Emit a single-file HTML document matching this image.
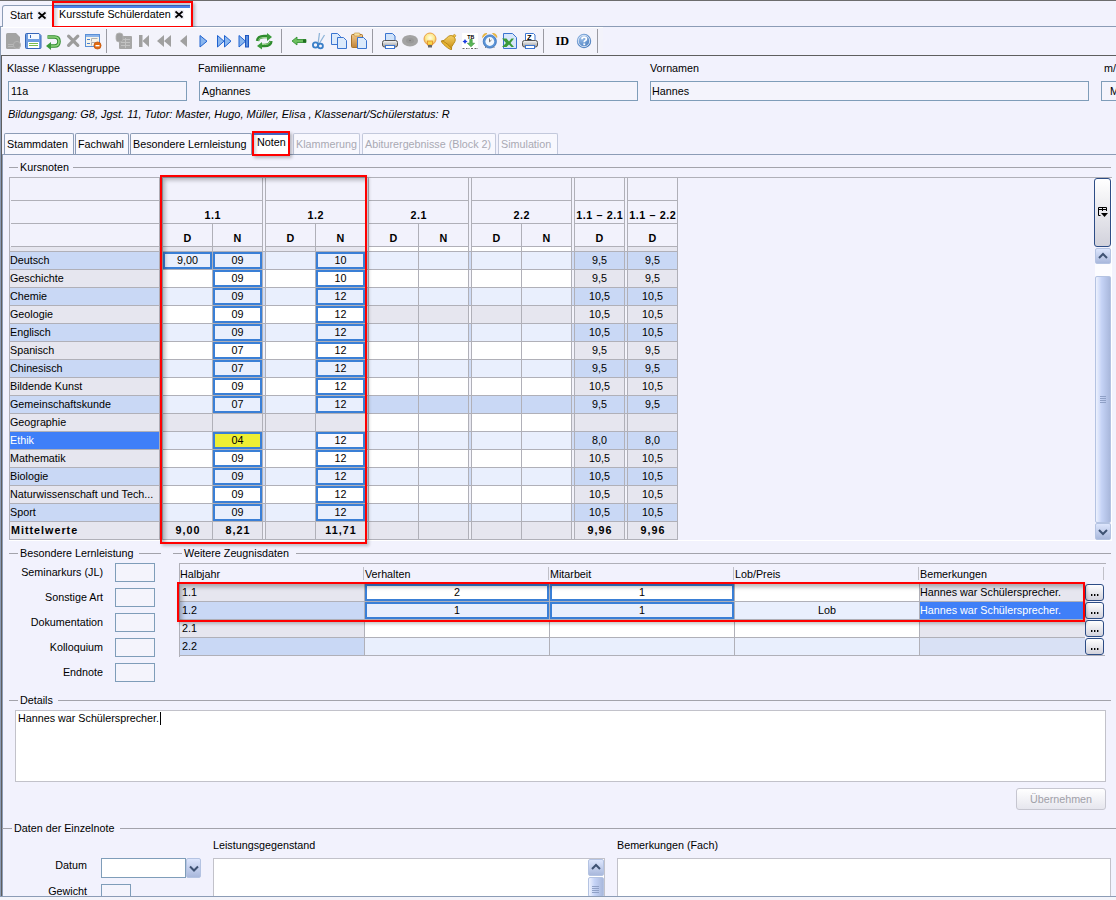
<!DOCTYPE html><html><head><meta charset="utf-8"><style>
*{box-sizing:border-box}
html,body{margin:0;padding:0}
body{width:1116px;height:900px;overflow:hidden;position:relative;background:#f2f2fd;font-family:"Liberation Sans",sans-serif;font-size:10.75px;color:#000}
.a{position:absolute}
.t{position:absolute;white-space:nowrap;line-height:13px}
.b{font-weight:bold}
</style></head><body>

<div class="a" style="left:0px;top:0px;width:1116px;height:1px;background:#6d6d6d"></div>
<div class="a" style="left:0px;top:1px;width:1116px;height:25px;background:#f2f2fd"></div>
<div class="a" style="left:0px;top:26px;width:1116px;height:1px;background:#8c9cb6"></div>
<div class="a" style="left:2px;top:5px;width:52px;height:22px;background:#f8f8fe;border:1px solid #8c9cb6;border-bottom:none;border-radius:3px 0 0 0"></div>
<div class="t" style="left:10px;top:9px;">Start</div>
<div class="a" style="left:37px;top:11px;width:10px;height:9px;background:#ececf4"></div>
<svg class="a" style="left:37px;top:11px" width="10" height="9"><path d="M1.5 1.5L8.5 7.5M8.5 1.5L1.5 7.5" stroke="#000" stroke-width="1.7"/></svg>
<div class="a" style="left:54px;top:3px;width:136px;height:24px;background:#ffffff"></div>
<div class="a" style="left:54px;top:3px;width:136px;height:2px;background:#c3ceda"></div>
<div class="a" style="left:54px;top:5px;width:136px;height:1px;background:#3a5cb5"></div>
<div class="a" style="left:54px;top:6px;width:136px;height:2px;background:#4a84ea"></div>
<div class="a" style="left:54px;top:8px;width:5px;height:19px;background:linear-gradient(90deg,#cfcfd4,#ffffff)"></div>
<div class="t" style="left:59px;top:8px;">Kursstufe Schülerdaten</div>
<div class="a" style="left:174px;top:10px;width:10px;height:9px;background:#f0f0f6"></div>
<svg class="a" style="left:174px;top:10px" width="10" height="9"><path d="M1.5 1.5L8.5 7.5M8.5 1.5L1.5 7.5" stroke="#000" stroke-width="1.7"/></svg>
<div class="a" style="left:52px;top:1px;width:141px;height:27px;border:2px solid #f00;box-shadow:2px 2px 3px rgba(0,0,0,.25)"></div>
<div class="a" style="left:1px;top:27px;width:602px;height:28px;background:#f3f3fb;border-top:1px solid #fff"></div>
<div class="a" style="left:0px;top:55px;width:1116px;height:1px;background:#5f5f5f"></div>
<div class="a" style="left:106px;top:29px;width:1px;height:24px;background:#9a9aa2"></div>
<div class="a" style="left:281px;top:29px;width:1px;height:24px;background:#9a9aa2"></div>
<div class="a" style="left:372px;top:29px;width:1px;height:24px;background:#9a9aa2"></div>
<div class="a" style="left:543px;top:29px;width:1px;height:24px;background:#9a9aa2"></div>
<div class="a" style="left:597px;top:29px;width:1px;height:24px;background:#9a9aa2"></div>
<svg class="a" style="left:0;top:0" width="620" height="56" viewBox="0 0 620 56"><defs><linearGradient id="gb" x1="0" y1="0" x2="0" y2="1"><stop offset="0" stop-color="#b9d3f7"/><stop offset="1" stop-color="#6a9fe6"/></linearGradient><linearGradient id="gg" x1="0" y1="0" x2="0" y2="1"><stop offset="0" stop-color="#a8dc9a"/><stop offset="1" stop-color="#3f9a3a"/></linearGradient><linearGradient id="gp" x1="0" y1="0" x2="0" y2="1"><stop offset="0" stop-color="#fafafa"/><stop offset="1" stop-color="#9a9a9a"/></linearGradient><radialGradient id="gbulb" cx=".5" cy=".4" r=".6"><stop offset="0" stop-color="#fffde8"/><stop offset=".6" stop-color="#fbe98a"/><stop offset="1" stop-color="#eaa24a"/></radialGradient><linearGradient id="gbell" x1="0" y1="0" x2="1" y2="1"><stop offset="0" stop-color="#ffe27a"/><stop offset="1" stop-color="#c88a10"/></linearGradient><linearGradient id="gclip" x1="0" y1="0" x2="0" y2="1"><stop offset="0" stop-color="#f2c88a"/><stop offset="1" stop-color="#c0843a"/></linearGradient></defs><path d="M6 34.5Q6 33 7.5 33H16L20 37V47.5Q20 49 18.5 49H7.5Q6 49 6 47.5Z" fill="#a3a3a3"/><path d="M8 44.5h8M8 46.5h8" stroke="#b8b8b8" stroke-width="1"/><circle cx="17" cy="45" r="3.6" fill="#a0a0a0" stroke="#b5b5b5" stroke-width="1"/><path d="M25.5 34.5Q25.5 33.5 26.5 33.5H39L41 35.5V47.5Q41 48.5 40 48.5H26.5Q25.5 48.5 25.5 47.5Z" fill="#6f9de0" stroke="#3565b9" stroke-width="1"/><rect x="28" y="34" width="11" height="5" fill="#f4f8fe"/><rect x="30" y="35" width="1" height="3" fill="#3565b9"/><rect x="28" y="42" width="11" height="6" fill="#ffffff"/><path d="M29 43.5h9M29 45.5h9" stroke="#7cbc4c" stroke-width="1.2"/><path d="M47.5 37H54.5Q59 37 59 41.5Q59 46 54.5 46H50" fill="none" stroke="#2e8a2e" stroke-width="3.6" stroke-linecap="butt"/><path d="M47.5 37H54.5Q59 37 59 41.5Q59 46 54.5 46H50" fill="none" stroke="#8fd47e" stroke-width="1.6"/><path d="M46 46L51 42V50Z" fill="#3a9a3a"/><path d="M68.6 36.2L77.8 45.4M77.8 36.2L68.6 45.4" stroke="#9c9c9c" stroke-width="3.2" stroke-linecap="round"/><rect x="85.5" y="34.5" width="14" height="12" fill="#f6f4ea" stroke="#5a8fd6" stroke-width="1"/><rect x="86" y="35" width="13" height="2" fill="#8cb4ea"/><path d="M87 39.5h3M87 43.5h3" stroke="#4a7fd0" stroke-width="1"/><path d="M91.5 38.5h6M91.5 38.5v3M91.5 42.5h4M91.5 42.5v3" stroke="#b0b0b0" stroke-width="1"/><circle cx="97.5" cy="45.5" r="3.6" fill="#e06a10" stroke="#b84a00" stroke-width=".6"/><rect x="95.5" y="45" width="4" height="1.4" fill="#fff"/><rect x="119" y="36" width="13" height="13" rx="1" fill="#a6a6a6"/><path d="M121 39.5h9M121 42.5h9M121 45.5h9M125.5 38v10" stroke="#c2c2c2" stroke-width="1"/><rect x="116" y="33" width="7" height="9" rx="3" fill="#a0a0a0" stroke="#b6b6b6" stroke-width=".8"/><rect x="139" y="35" width="3.5" height="12" fill="#a0a0a0"/><path d="M149 35V47L142.5 41Z" fill="#a0a0a0"/><path d="M164 35V47L157 41Z M171 35V47L164 41Z" fill="#a0a0a0"/><path d="M187 35V47L180 41Z" fill="#a0a0a0"/><path d="M200 35.5V47L207 41.2Z" fill="#8ab6ee" stroke="#1f62d0" stroke-width="1" stroke-linejoin="round"/><path d="M217.5 35.5V47L224 41.2Z M224.5 35.5V47L231 41.2Z" fill="#8ab6ee" stroke="#1f62d0" stroke-width="1" stroke-linejoin="round"/><path d="M239 35.5V47L245.5 41.2Z" fill="#8ab6ee" stroke="#1f62d0" stroke-width="1" stroke-linejoin="round"/><rect x="245.5" y="35.5" width="3" height="11.5" fill="#5a8fe0" stroke="#1f56c0" stroke-width="1"/><path d="M257.5 41Q258 36.5 264 36.5H268" fill="none" stroke="#2e8a2e" stroke-width="3.4"/><path d="M267 33L272 37L267 41Z" fill="#3a9a3a"/><path d="M271 41Q270.5 45.5 264.5 45.5H261" fill="none" stroke="#2e8a2e" stroke-width="3.4"/><path d="M262 42L257 46L262 49.5Z" fill="#3a9a3a"/><path d="M258.5 40.5Q259 37.5 264 37.5H267M270 41.5Q269.5 44.5 264.5 44.5H262" fill="none" stroke="#9ad68a" stroke-width="1"/><path d="M292 41L297 37V39.5H306V42.5H297V45Z" fill="#6cbf5e" stroke="#2a8a2a" stroke-width=".8"/><rect x="303" y="39.5" width="3" height="3" fill="#1f6f1f"/><path d="M319.5 33L318 44M324.5 35L319 44" stroke="#8fb5d8" stroke-width="1.3"/><circle cx="315.5" cy="45" r="2.6" fill="none" stroke="#3a7fc8" stroke-width="1.8"/><circle cx="320.5" cy="46" r="2.4" fill="none" stroke="#3a7fc8" stroke-width="1.8"/><path d="M331.5 33.5H337.5L340.5 36.5V44.5H331.5Z" fill="#dceafb" stroke="#3a74d0" stroke-width="1"/><path d="M337.5 37.5H343.5L346.5 40.5V48.5H337.5Z" fill="#dceafb" stroke="#3a74d0" stroke-width="1"/><rect x="351.5" y="34.5" width="11" height="13" rx="1" fill="url(#gclip)" stroke="#a8742a" stroke-width="1"/><rect x="354" y="33" width="6" height="3" rx="1" fill="#f8e0a0" stroke="#b88a3a" stroke-width=".6"/><path d="M357.5 37.5H363.5L366.5 40.5V48.5H357.5Z" fill="#dceafb" stroke="#3a74d0" stroke-width="1"/><path d="M385.5 33.5H392.5L395 36V41H385.5Z" fill="#cfe2fa" stroke="#3a74d0" stroke-width="1"/><rect x="382.5" y="40.5" width="15" height="6.5" rx="2" fill="url(#gp)" stroke="#555" stroke-width="1"/><rect x="385.5" y="45.5" width="9" height="3" fill="#fff" stroke="#3a74d0" stroke-width="1"/><ellipse cx="410" cy="40.7" rx="8" ry="5.8" fill="#a3a3a3"/><ellipse cx="410" cy="40.7" rx="4" ry="2.6" fill="#999"/><circle cx="410" cy="40.5" r=".8" fill="#777"/><circle cx="430" cy="39" r="6" fill="url(#gbulb)" stroke="#eca24a" stroke-width="1"/><rect x="427.5" y="41" width="5" height="4" fill="#f8d84a" stroke="#e08a2a" stroke-width=".8"/><rect x="428" y="45" width="4" height="2.5" fill="#666"/><g transform="rotate(40 450 41)"><path d="M443.5 46.5Q445.5 45 445.5 41Q445.5 35.5 450 35.2Q454.5 35.5 454.5 41Q454.5 45 456.5 46.5Z" fill="url(#gbell)" stroke="#b88a18" stroke-width=".9"/><ellipse cx="450" cy="46.5" rx="6.5" ry="1.4" fill="#e8b430" stroke="#a87a10" stroke-width=".7"/><circle cx="450" cy="34.2" r="1.3" fill="#f2c040" stroke="#b88a18" stroke-width=".6"/></g><rect x="462" y="33" width="16" height="16" fill="#fff"/><text x="467.2" y="38.6" font-family="Liberation Sans" font-weight="bold" font-size="6.2" fill="#000" textLength="7" lengthAdjust="spacingAndGlyphs">TB</text><path d="M465 39L465.9 40.6L467.5 41.5L465.9 42.4L465 44L464.1 42.4L462.5 41.5L464.1 40.6Z" fill="#1a3ae0"/><path d="M469.8 39.5H472.2V43.2H474.6L471 46.8L467.4 43.2H469.8Z" fill="#5cb85a" stroke="#2a8a2a" stroke-width=".6"/><path d="M462.5 48.5h2M466 48.5h1.5M468.5 48.5h1M471 48.5h2M474.5 48.5h1.5M476.5 48.5h1" stroke="#666" stroke-width="1"/><path d="M482.5 37.5Q483 33 487 33.5Z M497 37.5Q496.5 33 492.5 33.5Z" fill="#f4c040" stroke="#d8a020" stroke-width=".6"/><circle cx="489.8" cy="41.5" r="6.6" fill="#5a94d8" stroke="#3a70b8" stroke-width=".8"/><circle cx="489.8" cy="41.5" r="4.4" fill="#f4f8fd"/><path d="M489.5 38.5V41.8L491.5 40" stroke="#666" stroke-width=".9" fill="none"/><path d="M485 48L486.5 46.5M494.5 48L493 46.5" stroke="#888" stroke-width="1"/><path d="M503.5 33.5H512.5L516.5 37.5V48.5H503.5Z" fill="#d6e6fb" stroke="#3a74d0" stroke-width="1"/><path d="M502 38.5H506.5L509 41.5L511.5 38.5H514L510.5 43L514 47H511.5L509 44.5L506.5 47H502L506 43Z" fill="#3a9a3a"/><path d="M525.5 33.5H533.5L535 35V41H525.5Z" fill="#fff" stroke="#3a74d0" stroke-width="1"/><text x="527" y="40" font-family="Liberation Sans" font-weight="bold" font-size="7.5" fill="#000">Z</text><rect x="522.5" y="40.5" width="15" height="6.5" rx="2" fill="url(#gp)" stroke="#555" stroke-width="1"/><rect x="525.5" y="45.5" width="9" height="3" fill="#fff" stroke="#3a74d0" stroke-width="1"/><text x="555.5" y="45" font-family="Liberation Serif" font-weight="bold" font-size="11.5" fill="#000" textLength="13.5" lengthAdjust="spacingAndGlyphs">ID</text><defs><radialGradient id="ghelp" cx=".35" cy=".3" r=".8"><stop offset="0" stop-color="#9cc0ea"/><stop offset="1" stop-color="#3f74b8"/></radialGradient></defs><circle cx="584" cy="41" r="7.2" fill="url(#ghelp)"/><circle cx="584" cy="41" r="5.7" fill="none" stroke="#dfe9f7" stroke-width=".9"/><path d="M582 39.2Q582 37.2 584.2 37.2Q586.4 37.2 586.4 39Q586.4 40.2 585 40.8Q584.2 41.2 584.2 42.3" fill="none" stroke="#fff" stroke-width="1.7"/><rect x="583.3" y="43.4" width="1.9" height="1.8" fill="#fff"/></svg>
<div class="a" style="left:0px;top:26px;width:1px;height:874px;background:#8c9cb6"></div>
<div class="a" style="left:1px;top:55px;width:1px;height:841px;background:#5f5f5f"></div>
<div class="t" style="left:7px;top:62px;">Klasse / Klassengruppe</div>
<div class="t" style="left:198px;top:62px;">Familienname</div>
<div class="t" style="left:650px;top:62px;">Vornamen</div>
<div class="t" style="left:1104px;top:62px;">m/</div>
<div class="a" style="left:8px;top:81px;width:179px;height:20px;background:#f4f4fc;border:1px solid #7f9db9"></div>
<div class="t" style="left:11px;top:85px;">11a</div>
<div class="a" style="left:199px;top:81px;width:439px;height:20px;background:#f4f4fc;border:1px solid #7f9db9"></div>
<div class="t" style="left:202px;top:85px;">Aghannes</div>
<div class="a" style="left:650px;top:81px;width:439px;height:20px;background:#f4f4fc;border:1px solid #7f9db9"></div>
<div class="t" style="left:652px;top:85px;">Hannes</div>
<div class="a" style="left:1101px;top:81px;width:30px;height:20px;background:#f4f4fc;border:1px solid #7f9db9"></div>
<div class="t" style="left:1110px;top:85px;">M</div>
<div class="t" style="left:8px;top:108px;font-style:italic;font-size:10.95px">Bildungsgang: G8, Jgst. 11, Tutor: Master, Hugo, Müller, Elisa , Klassenart/Schülerstatus: R</div>
<div class="a" style="left:2px;top:154px;width:1114px;height:1px;background:#8c9cb6"></div>
<div class="a" style="left:2px;top:154px;width:1px;height:742px;background:#8c9cb6"></div>
<div class="a" style="left:4px;top:133px;width:70px;height:21px;background:#f8f8fe;border:1px solid #8c9cb6;border-bottom:none;border-radius:2px 2px 0 0"></div>
<div class="t" style="left:7px;top:138px;color:#000">Stammdaten</div>
<div class="a" style="left:75px;top:133px;width:54px;height:21px;background:#f8f8fe;border:1px solid #8c9cb6;border-bottom:none;border-radius:2px 2px 0 0"></div>
<div class="t" style="left:78px;top:138px;color:#000">Fachwahl</div>
<div class="a" style="left:130px;top:133px;width:122px;height:21px;background:#f8f8fe;border:1px solid #8c9cb6;border-bottom:none;border-radius:2px 2px 0 0"></div>
<div class="t" style="left:133px;top:138px;color:#000">Besondere Lernleistung</div>
<div class="a" style="left:293px;top:133px;width:67px;height:21px;background:#f8f8fe;border:1px solid #c3c9dc;border-bottom:none;border-radius:2px 2px 0 0"></div>
<div class="t" style="left:296px;top:138px;color:#a9a9b3">Klammerung</div>
<div class="a" style="left:362px;top:133px;width:134px;height:21px;background:#f8f8fe;border:1px solid #c3c9dc;border-bottom:none;border-radius:2px 2px 0 0"></div>
<div class="t" style="left:365px;top:138px;color:#a9a9b3">Abiturergebnisse (Block 2)</div>
<div class="a" style="left:498px;top:133px;width:60px;height:21px;background:#f8f8fe;border:1px solid #c3c9dc;border-bottom:none;border-radius:2px 2px 0 0"></div>
<div class="t" style="left:501px;top:138px;color:#a9a9b3">Simulation</div>
<div class="a" style="left:254px;top:133px;width:34px;height:21px;background:#ffffff"></div>
<div class="a" style="left:254px;top:133px;width:34px;height:2px;background:#4466c0"></div>
<div class="a" style="left:254px;top:135px;width:4px;height:19px;background:linear-gradient(90deg,#d4d4da,#ffffff)"></div>
<div class="t" style="left:257px;top:136px;">Noten</div>
<div class="a" style="left:252px;top:131px;width:38px;height:25px;border:2px solid #f00;box-shadow:2px 2px 3px rgba(0,0,0,.25)"></div>
<div class="a" style="left:9px;top:167px;width:9px;height:1px;background:#a3a3ab"></div>
<div class="t" style="left:20px;top:161px;">Kursnoten</div>
<div class="a" style="left:73px;top:167px;width:1038px;height:1px;background:#a3a3ab"></div>
<div class="a" style="left:9px;top:177px;width:1103px;height:1px;background:#b0b0b8"></div>
<div class="a" style="left:9px;top:177px;width:1px;height:363px;background:#b0b0b8"></div>
<div class="a" style="left:9px;top:540px;width:1103px;height:1px;background:#fff"></div>
<div class="a" style="left:10px;top:178px;width:667px;height:68px;background:#f2f2fc"></div>
<div class="a" style="left:159px;top:178px;width:1px;height:361px;background:#b0b0b8"></div>
<div class="a" style="left:162px;top:178px;width:1px;height:361px;background:#b0b0b8"></div>
<div class="a" style="left:262px;top:178px;width:1px;height:361px;background:#b0b0b8"></div>
<div class="a" style="left:265px;top:178px;width:1px;height:361px;background:#b0b0b8"></div>
<div class="a" style="left:365px;top:178px;width:1px;height:361px;background:#b0b0b8"></div>
<div class="a" style="left:368px;top:178px;width:1px;height:361px;background:#b0b0b8"></div>
<div class="a" style="left:468px;top:178px;width:1px;height:361px;background:#b0b0b8"></div>
<div class="a" style="left:471px;top:178px;width:1px;height:361px;background:#b0b0b8"></div>
<div class="a" style="left:571px;top:178px;width:1px;height:361px;background:#b0b0b8"></div>
<div class="a" style="left:574px;top:178px;width:1px;height:361px;background:#b0b0b8"></div>
<div class="a" style="left:624px;top:178px;width:1px;height:361px;background:#b0b0b8"></div>
<div class="a" style="left:627px;top:178px;width:1px;height:361px;background:#b0b0b8"></div>
<div class="a" style="left:677px;top:178px;width:1px;height:361px;background:#b0b0b8"></div>
<div class="a" style="left:212px;top:224px;width:1px;height:315px;background:#b0b0b8"></div>
<div class="a" style="left:315px;top:224px;width:1px;height:315px;background:#b0b0b8"></div>
<div class="a" style="left:418px;top:224px;width:1px;height:315px;background:#b0b0b8"></div>
<div class="a" style="left:521px;top:224px;width:1px;height:315px;background:#b0b0b8"></div>
<div class="a" style="left:11px;top:200px;width:148px;height:1px;background:#b0b0b8"></div>
<div class="a" style="left:163px;top:200px;width:99px;height:1px;background:#b0b0b8"></div>
<div class="a" style="left:266px;top:200px;width:99px;height:1px;background:#b0b0b8"></div>
<div class="a" style="left:369px;top:200px;width:99px;height:1px;background:#b0b0b8"></div>
<div class="a" style="left:472px;top:200px;width:99px;height:1px;background:#b0b0b8"></div>
<div class="a" style="left:575px;top:200px;width:49px;height:1px;background:#b0b0b8"></div>
<div class="a" style="left:628px;top:200px;width:49px;height:1px;background:#b0b0b8"></div>
<div class="a" style="left:11px;top:223px;width:148px;height:1px;background:#b0b0b8"></div>
<div class="a" style="left:163px;top:223px;width:99px;height:1px;background:#b0b0b8"></div>
<div class="a" style="left:266px;top:223px;width:99px;height:1px;background:#b0b0b8"></div>
<div class="a" style="left:369px;top:223px;width:99px;height:1px;background:#b0b0b8"></div>
<div class="a" style="left:472px;top:223px;width:99px;height:1px;background:#b0b0b8"></div>
<div class="a" style="left:575px;top:223px;width:49px;height:1px;background:#b0b0b8"></div>
<div class="a" style="left:628px;top:223px;width:49px;height:1px;background:#b0b0b8"></div>
<div class="a" style="left:11px;top:246px;width:148px;height:1px;background:#b0b0b8"></div>
<div class="a" style="left:163px;top:246px;width:99px;height:1px;background:#b0b0b8"></div>
<div class="a" style="left:266px;top:246px;width:99px;height:1px;background:#b0b0b8"></div>
<div class="a" style="left:369px;top:246px;width:99px;height:1px;background:#b0b0b8"></div>
<div class="a" style="left:472px;top:246px;width:99px;height:1px;background:#b0b0b8"></div>
<div class="a" style="left:575px;top:246px;width:49px;height:1px;background:#b0b0b8"></div>
<div class="a" style="left:628px;top:246px;width:49px;height:1px;background:#b0b0b8"></div>
<div class="t" style="left:163px;top:209px;width:99px;text-align:center;font-weight:bold;letter-spacing:0.6px;text-indent:0.6px">1.1</div>
<div class="t" style="left:266px;top:209px;width:99px;text-align:center;font-weight:bold;letter-spacing:0.6px;text-indent:0.6px">1.2</div>
<div class="t" style="left:369px;top:209px;width:99px;text-align:center;font-weight:bold;letter-spacing:0.6px;text-indent:0.6px">2.1</div>
<div class="t" style="left:472px;top:209px;width:99px;text-align:center;font-weight:bold;letter-spacing:0.6px;text-indent:0.6px">2.2</div>
<div class="t" style="left:575px;top:209px;width:49px;text-align:center;font-weight:bold;letter-spacing:0.6px;text-indent:0.6px">1.1 &ndash; 2.1</div>
<div class="t" style="left:628px;top:209px;width:49px;text-align:center;font-weight:bold;letter-spacing:0.6px;text-indent:0.6px">1.1 &ndash; 2.2</div>
<div class="t" style="left:163px;top:232px;width:49px;text-align:center;font-weight:bold;letter-spacing:0.6px;text-indent:0.6px">D</div>
<div class="t" style="left:213px;top:232px;width:49px;text-align:center;font-weight:bold;letter-spacing:0.6px;text-indent:0.6px">N</div>
<div class="t" style="left:266px;top:232px;width:49px;text-align:center;font-weight:bold;letter-spacing:0.6px;text-indent:0.6px">D</div>
<div class="t" style="left:316px;top:232px;width:49px;text-align:center;font-weight:bold;letter-spacing:0.6px;text-indent:0.6px">N</div>
<div class="t" style="left:369px;top:232px;width:49px;text-align:center;font-weight:bold;letter-spacing:0.6px;text-indent:0.6px">D</div>
<div class="t" style="left:419px;top:232px;width:49px;text-align:center;font-weight:bold;letter-spacing:0.6px;text-indent:0.6px">N</div>
<div class="t" style="left:472px;top:232px;width:49px;text-align:center;font-weight:bold;letter-spacing:0.6px;text-indent:0.6px">D</div>
<div class="t" style="left:522px;top:232px;width:49px;text-align:center;font-weight:bold;letter-spacing:0.6px;text-indent:0.6px">N</div>
<div class="t" style="left:575px;top:232px;width:49px;text-align:center;font-weight:bold;letter-spacing:0.6px;text-indent:0.6px">D</div>
<div class="t" style="left:628px;top:232px;width:49px;text-align:center;font-weight:bold;letter-spacing:0.6px;text-indent:0.6px">D</div>
<div class="a" style="left:10px;top:247px;width:149px;height:4px;background:#e6e6ef"></div>
<div class="a" style="left:163px;top:247px;width:49px;height:4px;background:#e6e6ef"></div>
<div class="a" style="left:213px;top:247px;width:49px;height:4px;background:#e6e6ef"></div>
<div class="a" style="left:266px;top:247px;width:49px;height:4px;background:#e6e6ef"></div>
<div class="a" style="left:316px;top:247px;width:49px;height:4px;background:#e6e6ef"></div>
<div class="a" style="left:369px;top:247px;width:49px;height:4px;background:#ffffff"></div>
<div class="a" style="left:419px;top:247px;width:49px;height:4px;background:#ffffff"></div>
<div class="a" style="left:472px;top:247px;width:49px;height:4px;background:#ffffff"></div>
<div class="a" style="left:522px;top:247px;width:49px;height:4px;background:#ffffff"></div>
<div class="a" style="left:575px;top:247px;width:49px;height:4px;background:#e6e6ef"></div>
<div class="a" style="left:628px;top:247px;width:49px;height:4px;background:#e6e6ef"></div>
<div class="a" style="left:160px;top:247px;width:2px;height:4px;background:#f4f4fc"></div>
<div class="a" style="left:263px;top:247px;width:2px;height:4px;background:#f4f4fc"></div>
<div class="a" style="left:366px;top:247px;width:2px;height:4px;background:#f4f4fc"></div>
<div class="a" style="left:469px;top:247px;width:2px;height:4px;background:#f4f4fc"></div>
<div class="a" style="left:572px;top:247px;width:2px;height:4px;background:#f4f4fc"></div>
<div class="a" style="left:625px;top:247px;width:2px;height:4px;background:#f4f4fc"></div>
<div class="a" style="left:10px;top:251px;width:668px;height:1px;background:#b0b0b8"></div>
<div class="a" style="left:10px;top:252px;width:149px;height:17px;background:#c9d8f5"></div>
<div class="t" style="left:10px;top:254px;">Deutsch</div>
<div class="a" style="left:163px;top:252px;width:49px;height:17px;background:#e9effd"></div>
<div class="a" style="left:213px;top:252px;width:49px;height:17px;background:#e9effd"></div>
<div class="a" style="left:266px;top:252px;width:49px;height:17px;background:#e9effd"></div>
<div class="a" style="left:316px;top:252px;width:49px;height:17px;background:#e9effd"></div>
<div class="a" style="left:369px;top:252px;width:49px;height:17px;background:#e9effd"></div>
<div class="a" style="left:419px;top:252px;width:49px;height:17px;background:#e9effd"></div>
<div class="a" style="left:472px;top:252px;width:49px;height:17px;background:#e9effd"></div>
<div class="a" style="left:522px;top:252px;width:49px;height:17px;background:#e9effd"></div>
<div class="a" style="left:575px;top:252px;width:49px;height:17px;background:#c9d8f5"></div>
<div class="a" style="left:628px;top:252px;width:49px;height:17px;background:#c9d8f5"></div>
<div class="a" style="left:160px;top:252px;width:2px;height:17px;background:#cfdcf6"></div>
<div class="a" style="left:263px;top:252px;width:2px;height:17px;background:#cfdcf6"></div>
<div class="a" style="left:366px;top:252px;width:2px;height:17px;background:#cfdcf6"></div>
<div class="a" style="left:469px;top:252px;width:2px;height:17px;background:#cfdcf6"></div>
<div class="a" style="left:572px;top:252px;width:2px;height:17px;background:#cfdcf6"></div>
<div class="a" style="left:625px;top:252px;width:2px;height:17px;background:#cfdcf6"></div>
<div class="a" style="left:163px;top:252px;width:49px;height:17px;background:#e9effd;border:2px solid #3a7fd6"></div>
<div class="t" style="left:163px;top:254px;width:49px;text-align:center;">9,00</div>
<div class="a" style="left:213px;top:252px;width:49px;height:17px;background:#e9effd;border:2px solid #3a7fd6"></div>
<div class="t" style="left:213px;top:254px;width:49px;text-align:center;">09</div>
<div class="a" style="left:316px;top:252px;width:49px;height:17px;background:#e9effd;border:2px solid #3a7fd6"></div>
<div class="t" style="left:316px;top:254px;width:49px;text-align:center;">10</div>
<div class="t" style="left:575px;top:254px;width:49px;text-align:center;">9,5</div>
<div class="t" style="left:628px;top:254px;width:49px;text-align:center;">9,5</div>
<div class="a" style="left:10px;top:269px;width:668px;height:1px;background:#b0b0b8"></div>
<div class="a" style="left:10px;top:270px;width:149px;height:17px;background:#e6e6ef"></div>
<div class="t" style="left:10px;top:272px;">Geschichte</div>
<div class="a" style="left:163px;top:270px;width:49px;height:17px;background:#ffffff"></div>
<div class="a" style="left:213px;top:270px;width:49px;height:17px;background:#ffffff"></div>
<div class="a" style="left:266px;top:270px;width:49px;height:17px;background:#ffffff"></div>
<div class="a" style="left:316px;top:270px;width:49px;height:17px;background:#ffffff"></div>
<div class="a" style="left:369px;top:270px;width:49px;height:17px;background:#ffffff"></div>
<div class="a" style="left:419px;top:270px;width:49px;height:17px;background:#ffffff"></div>
<div class="a" style="left:472px;top:270px;width:49px;height:17px;background:#ffffff"></div>
<div class="a" style="left:522px;top:270px;width:49px;height:17px;background:#ffffff"></div>
<div class="a" style="left:575px;top:270px;width:49px;height:17px;background:#e6e6ef"></div>
<div class="a" style="left:628px;top:270px;width:49px;height:17px;background:#e6e6ef"></div>
<div class="a" style="left:160px;top:270px;width:2px;height:17px;background:#f4f4fc"></div>
<div class="a" style="left:263px;top:270px;width:2px;height:17px;background:#f4f4fc"></div>
<div class="a" style="left:366px;top:270px;width:2px;height:17px;background:#f4f4fc"></div>
<div class="a" style="left:469px;top:270px;width:2px;height:17px;background:#f4f4fc"></div>
<div class="a" style="left:572px;top:270px;width:2px;height:17px;background:#f4f4fc"></div>
<div class="a" style="left:625px;top:270px;width:2px;height:17px;background:#f4f4fc"></div>
<div class="a" style="left:213px;top:270px;width:49px;height:17px;background:#ffffff;border:2px solid #3a7fd6"></div>
<div class="t" style="left:213px;top:272px;width:49px;text-align:center;">09</div>
<div class="a" style="left:316px;top:270px;width:49px;height:17px;background:#ffffff;border:2px solid #3a7fd6"></div>
<div class="t" style="left:316px;top:272px;width:49px;text-align:center;">10</div>
<div class="t" style="left:575px;top:272px;width:49px;text-align:center;">9,5</div>
<div class="t" style="left:628px;top:272px;width:49px;text-align:center;">9,5</div>
<div class="a" style="left:10px;top:287px;width:668px;height:1px;background:#b0b0b8"></div>
<div class="a" style="left:10px;top:288px;width:149px;height:17px;background:#c9d8f5"></div>
<div class="t" style="left:10px;top:290px;">Chemie</div>
<div class="a" style="left:163px;top:288px;width:49px;height:17px;background:#e9effd"></div>
<div class="a" style="left:213px;top:288px;width:49px;height:17px;background:#e9effd"></div>
<div class="a" style="left:266px;top:288px;width:49px;height:17px;background:#e9effd"></div>
<div class="a" style="left:316px;top:288px;width:49px;height:17px;background:#e9effd"></div>
<div class="a" style="left:369px;top:288px;width:49px;height:17px;background:#e9effd"></div>
<div class="a" style="left:419px;top:288px;width:49px;height:17px;background:#e9effd"></div>
<div class="a" style="left:472px;top:288px;width:49px;height:17px;background:#e9effd"></div>
<div class="a" style="left:522px;top:288px;width:49px;height:17px;background:#e9effd"></div>
<div class="a" style="left:575px;top:288px;width:49px;height:17px;background:#c9d8f5"></div>
<div class="a" style="left:628px;top:288px;width:49px;height:17px;background:#c9d8f5"></div>
<div class="a" style="left:160px;top:288px;width:2px;height:17px;background:#cfdcf6"></div>
<div class="a" style="left:263px;top:288px;width:2px;height:17px;background:#cfdcf6"></div>
<div class="a" style="left:366px;top:288px;width:2px;height:17px;background:#cfdcf6"></div>
<div class="a" style="left:469px;top:288px;width:2px;height:17px;background:#cfdcf6"></div>
<div class="a" style="left:572px;top:288px;width:2px;height:17px;background:#cfdcf6"></div>
<div class="a" style="left:625px;top:288px;width:2px;height:17px;background:#cfdcf6"></div>
<div class="a" style="left:213px;top:288px;width:49px;height:17px;background:#e9effd;border:2px solid #3a7fd6"></div>
<div class="t" style="left:213px;top:290px;width:49px;text-align:center;">09</div>
<div class="a" style="left:316px;top:288px;width:49px;height:17px;background:#e9effd;border:2px solid #3a7fd6"></div>
<div class="t" style="left:316px;top:290px;width:49px;text-align:center;">12</div>
<div class="t" style="left:575px;top:290px;width:49px;text-align:center;">10,5</div>
<div class="t" style="left:628px;top:290px;width:49px;text-align:center;">10,5</div>
<div class="a" style="left:10px;top:305px;width:668px;height:1px;background:#b0b0b8"></div>
<div class="a" style="left:10px;top:306px;width:149px;height:17px;background:#e6e6ef"></div>
<div class="t" style="left:10px;top:308px;">Geologie</div>
<div class="a" style="left:163px;top:306px;width:49px;height:17px;background:#ffffff"></div>
<div class="a" style="left:213px;top:306px;width:49px;height:17px;background:#ffffff"></div>
<div class="a" style="left:266px;top:306px;width:49px;height:17px;background:#ffffff"></div>
<div class="a" style="left:316px;top:306px;width:49px;height:17px;background:#ffffff"></div>
<div class="a" style="left:369px;top:306px;width:49px;height:17px;background:#e6e6ef"></div>
<div class="a" style="left:419px;top:306px;width:49px;height:17px;background:#e6e6ef"></div>
<div class="a" style="left:472px;top:306px;width:49px;height:17px;background:#e6e6ef"></div>
<div class="a" style="left:522px;top:306px;width:49px;height:17px;background:#e6e6ef"></div>
<div class="a" style="left:575px;top:306px;width:49px;height:17px;background:#e6e6ef"></div>
<div class="a" style="left:628px;top:306px;width:49px;height:17px;background:#e6e6ef"></div>
<div class="a" style="left:160px;top:306px;width:2px;height:17px;background:#f4f4fc"></div>
<div class="a" style="left:263px;top:306px;width:2px;height:17px;background:#f4f4fc"></div>
<div class="a" style="left:366px;top:306px;width:2px;height:17px;background:#f4f4fc"></div>
<div class="a" style="left:469px;top:306px;width:2px;height:17px;background:#f4f4fc"></div>
<div class="a" style="left:572px;top:306px;width:2px;height:17px;background:#f4f4fc"></div>
<div class="a" style="left:625px;top:306px;width:2px;height:17px;background:#f4f4fc"></div>
<div class="a" style="left:213px;top:306px;width:49px;height:17px;background:#ffffff;border:2px solid #3a7fd6"></div>
<div class="t" style="left:213px;top:308px;width:49px;text-align:center;">09</div>
<div class="a" style="left:316px;top:306px;width:49px;height:17px;background:#ffffff;border:2px solid #3a7fd6"></div>
<div class="t" style="left:316px;top:308px;width:49px;text-align:center;">12</div>
<div class="t" style="left:575px;top:308px;width:49px;text-align:center;">10,5</div>
<div class="t" style="left:628px;top:308px;width:49px;text-align:center;">10,5</div>
<div class="a" style="left:10px;top:323px;width:668px;height:1px;background:#b0b0b8"></div>
<div class="a" style="left:10px;top:324px;width:149px;height:17px;background:#c9d8f5"></div>
<div class="t" style="left:10px;top:326px;">Englisch</div>
<div class="a" style="left:163px;top:324px;width:49px;height:17px;background:#e9effd"></div>
<div class="a" style="left:213px;top:324px;width:49px;height:17px;background:#e9effd"></div>
<div class="a" style="left:266px;top:324px;width:49px;height:17px;background:#e9effd"></div>
<div class="a" style="left:316px;top:324px;width:49px;height:17px;background:#e9effd"></div>
<div class="a" style="left:369px;top:324px;width:49px;height:17px;background:#e9effd"></div>
<div class="a" style="left:419px;top:324px;width:49px;height:17px;background:#e9effd"></div>
<div class="a" style="left:472px;top:324px;width:49px;height:17px;background:#e9effd"></div>
<div class="a" style="left:522px;top:324px;width:49px;height:17px;background:#e9effd"></div>
<div class="a" style="left:575px;top:324px;width:49px;height:17px;background:#c9d8f5"></div>
<div class="a" style="left:628px;top:324px;width:49px;height:17px;background:#c9d8f5"></div>
<div class="a" style="left:160px;top:324px;width:2px;height:17px;background:#cfdcf6"></div>
<div class="a" style="left:263px;top:324px;width:2px;height:17px;background:#cfdcf6"></div>
<div class="a" style="left:366px;top:324px;width:2px;height:17px;background:#cfdcf6"></div>
<div class="a" style="left:469px;top:324px;width:2px;height:17px;background:#cfdcf6"></div>
<div class="a" style="left:572px;top:324px;width:2px;height:17px;background:#cfdcf6"></div>
<div class="a" style="left:625px;top:324px;width:2px;height:17px;background:#cfdcf6"></div>
<div class="a" style="left:213px;top:324px;width:49px;height:17px;background:#e9effd;border:2px solid #3a7fd6"></div>
<div class="t" style="left:213px;top:326px;width:49px;text-align:center;">09</div>
<div class="a" style="left:316px;top:324px;width:49px;height:17px;background:#e9effd;border:2px solid #3a7fd6"></div>
<div class="t" style="left:316px;top:326px;width:49px;text-align:center;">12</div>
<div class="t" style="left:575px;top:326px;width:49px;text-align:center;">10,5</div>
<div class="t" style="left:628px;top:326px;width:49px;text-align:center;">10,5</div>
<div class="a" style="left:10px;top:341px;width:668px;height:1px;background:#b0b0b8"></div>
<div class="a" style="left:10px;top:342px;width:149px;height:17px;background:#e6e6ef"></div>
<div class="t" style="left:10px;top:344px;">Spanisch</div>
<div class="a" style="left:163px;top:342px;width:49px;height:17px;background:#ffffff"></div>
<div class="a" style="left:213px;top:342px;width:49px;height:17px;background:#ffffff"></div>
<div class="a" style="left:266px;top:342px;width:49px;height:17px;background:#ffffff"></div>
<div class="a" style="left:316px;top:342px;width:49px;height:17px;background:#ffffff"></div>
<div class="a" style="left:369px;top:342px;width:49px;height:17px;background:#ffffff"></div>
<div class="a" style="left:419px;top:342px;width:49px;height:17px;background:#ffffff"></div>
<div class="a" style="left:472px;top:342px;width:49px;height:17px;background:#ffffff"></div>
<div class="a" style="left:522px;top:342px;width:49px;height:17px;background:#ffffff"></div>
<div class="a" style="left:575px;top:342px;width:49px;height:17px;background:#e6e6ef"></div>
<div class="a" style="left:628px;top:342px;width:49px;height:17px;background:#e6e6ef"></div>
<div class="a" style="left:160px;top:342px;width:2px;height:17px;background:#f4f4fc"></div>
<div class="a" style="left:263px;top:342px;width:2px;height:17px;background:#f4f4fc"></div>
<div class="a" style="left:366px;top:342px;width:2px;height:17px;background:#f4f4fc"></div>
<div class="a" style="left:469px;top:342px;width:2px;height:17px;background:#f4f4fc"></div>
<div class="a" style="left:572px;top:342px;width:2px;height:17px;background:#f4f4fc"></div>
<div class="a" style="left:625px;top:342px;width:2px;height:17px;background:#f4f4fc"></div>
<div class="a" style="left:213px;top:342px;width:49px;height:17px;background:#ffffff;border:2px solid #3a7fd6"></div>
<div class="t" style="left:213px;top:344px;width:49px;text-align:center;">07</div>
<div class="a" style="left:316px;top:342px;width:49px;height:17px;background:#ffffff;border:2px solid #3a7fd6"></div>
<div class="t" style="left:316px;top:344px;width:49px;text-align:center;">12</div>
<div class="t" style="left:575px;top:344px;width:49px;text-align:center;">9,5</div>
<div class="t" style="left:628px;top:344px;width:49px;text-align:center;">9,5</div>
<div class="a" style="left:10px;top:359px;width:668px;height:1px;background:#b0b0b8"></div>
<div class="a" style="left:10px;top:360px;width:149px;height:17px;background:#c9d8f5"></div>
<div class="t" style="left:10px;top:362px;">Chinesisch</div>
<div class="a" style="left:163px;top:360px;width:49px;height:17px;background:#e9effd"></div>
<div class="a" style="left:213px;top:360px;width:49px;height:17px;background:#e9effd"></div>
<div class="a" style="left:266px;top:360px;width:49px;height:17px;background:#e9effd"></div>
<div class="a" style="left:316px;top:360px;width:49px;height:17px;background:#e9effd"></div>
<div class="a" style="left:369px;top:360px;width:49px;height:17px;background:#e9effd"></div>
<div class="a" style="left:419px;top:360px;width:49px;height:17px;background:#e9effd"></div>
<div class="a" style="left:472px;top:360px;width:49px;height:17px;background:#e9effd"></div>
<div class="a" style="left:522px;top:360px;width:49px;height:17px;background:#e9effd"></div>
<div class="a" style="left:575px;top:360px;width:49px;height:17px;background:#c9d8f5"></div>
<div class="a" style="left:628px;top:360px;width:49px;height:17px;background:#c9d8f5"></div>
<div class="a" style="left:160px;top:360px;width:2px;height:17px;background:#cfdcf6"></div>
<div class="a" style="left:263px;top:360px;width:2px;height:17px;background:#cfdcf6"></div>
<div class="a" style="left:366px;top:360px;width:2px;height:17px;background:#cfdcf6"></div>
<div class="a" style="left:469px;top:360px;width:2px;height:17px;background:#cfdcf6"></div>
<div class="a" style="left:572px;top:360px;width:2px;height:17px;background:#cfdcf6"></div>
<div class="a" style="left:625px;top:360px;width:2px;height:17px;background:#cfdcf6"></div>
<div class="a" style="left:213px;top:360px;width:49px;height:17px;background:#e9effd;border:2px solid #3a7fd6"></div>
<div class="t" style="left:213px;top:362px;width:49px;text-align:center;">07</div>
<div class="a" style="left:316px;top:360px;width:49px;height:17px;background:#e9effd;border:2px solid #3a7fd6"></div>
<div class="t" style="left:316px;top:362px;width:49px;text-align:center;">12</div>
<div class="t" style="left:575px;top:362px;width:49px;text-align:center;">9,5</div>
<div class="t" style="left:628px;top:362px;width:49px;text-align:center;">9,5</div>
<div class="a" style="left:10px;top:377px;width:668px;height:1px;background:#b0b0b8"></div>
<div class="a" style="left:10px;top:378px;width:149px;height:17px;background:#e6e6ef"></div>
<div class="t" style="left:10px;top:380px;">Bildende Kunst</div>
<div class="a" style="left:163px;top:378px;width:49px;height:17px;background:#ffffff"></div>
<div class="a" style="left:213px;top:378px;width:49px;height:17px;background:#ffffff"></div>
<div class="a" style="left:266px;top:378px;width:49px;height:17px;background:#ffffff"></div>
<div class="a" style="left:316px;top:378px;width:49px;height:17px;background:#ffffff"></div>
<div class="a" style="left:369px;top:378px;width:49px;height:17px;background:#ffffff"></div>
<div class="a" style="left:419px;top:378px;width:49px;height:17px;background:#ffffff"></div>
<div class="a" style="left:472px;top:378px;width:49px;height:17px;background:#ffffff"></div>
<div class="a" style="left:522px;top:378px;width:49px;height:17px;background:#ffffff"></div>
<div class="a" style="left:575px;top:378px;width:49px;height:17px;background:#e6e6ef"></div>
<div class="a" style="left:628px;top:378px;width:49px;height:17px;background:#e6e6ef"></div>
<div class="a" style="left:160px;top:378px;width:2px;height:17px;background:#f4f4fc"></div>
<div class="a" style="left:263px;top:378px;width:2px;height:17px;background:#f4f4fc"></div>
<div class="a" style="left:366px;top:378px;width:2px;height:17px;background:#f4f4fc"></div>
<div class="a" style="left:469px;top:378px;width:2px;height:17px;background:#f4f4fc"></div>
<div class="a" style="left:572px;top:378px;width:2px;height:17px;background:#f4f4fc"></div>
<div class="a" style="left:625px;top:378px;width:2px;height:17px;background:#f4f4fc"></div>
<div class="a" style="left:213px;top:378px;width:49px;height:17px;background:#ffffff;border:2px solid #3a7fd6"></div>
<div class="t" style="left:213px;top:380px;width:49px;text-align:center;">09</div>
<div class="a" style="left:316px;top:378px;width:49px;height:17px;background:#ffffff;border:2px solid #3a7fd6"></div>
<div class="t" style="left:316px;top:380px;width:49px;text-align:center;">12</div>
<div class="t" style="left:575px;top:380px;width:49px;text-align:center;">10,5</div>
<div class="t" style="left:628px;top:380px;width:49px;text-align:center;">10,5</div>
<div class="a" style="left:10px;top:395px;width:668px;height:1px;background:#b0b0b8"></div>
<div class="a" style="left:10px;top:396px;width:149px;height:17px;background:#c9d8f5"></div>
<div class="t" style="left:10px;top:398px;">Gemeinschaftskunde</div>
<div class="a" style="left:163px;top:396px;width:49px;height:17px;background:#e9effd"></div>
<div class="a" style="left:213px;top:396px;width:49px;height:17px;background:#e9effd"></div>
<div class="a" style="left:266px;top:396px;width:49px;height:17px;background:#e9effd"></div>
<div class="a" style="left:316px;top:396px;width:49px;height:17px;background:#e9effd"></div>
<div class="a" style="left:369px;top:396px;width:49px;height:17px;background:#c9d8f5"></div>
<div class="a" style="left:419px;top:396px;width:49px;height:17px;background:#c9d8f5"></div>
<div class="a" style="left:472px;top:396px;width:49px;height:17px;background:#c9d8f5"></div>
<div class="a" style="left:522px;top:396px;width:49px;height:17px;background:#c9d8f5"></div>
<div class="a" style="left:575px;top:396px;width:49px;height:17px;background:#c9d8f5"></div>
<div class="a" style="left:628px;top:396px;width:49px;height:17px;background:#c9d8f5"></div>
<div class="a" style="left:160px;top:396px;width:2px;height:17px;background:#cfdcf6"></div>
<div class="a" style="left:263px;top:396px;width:2px;height:17px;background:#cfdcf6"></div>
<div class="a" style="left:366px;top:396px;width:2px;height:17px;background:#cfdcf6"></div>
<div class="a" style="left:469px;top:396px;width:2px;height:17px;background:#cfdcf6"></div>
<div class="a" style="left:572px;top:396px;width:2px;height:17px;background:#cfdcf6"></div>
<div class="a" style="left:625px;top:396px;width:2px;height:17px;background:#cfdcf6"></div>
<div class="a" style="left:213px;top:396px;width:49px;height:17px;background:#e9effd;border:2px solid #3a7fd6"></div>
<div class="t" style="left:213px;top:398px;width:49px;text-align:center;">07</div>
<div class="a" style="left:316px;top:396px;width:49px;height:17px;background:#e9effd;border:2px solid #3a7fd6"></div>
<div class="t" style="left:316px;top:398px;width:49px;text-align:center;">12</div>
<div class="t" style="left:575px;top:398px;width:49px;text-align:center;">9,5</div>
<div class="t" style="left:628px;top:398px;width:49px;text-align:center;">9,5</div>
<div class="a" style="left:10px;top:413px;width:668px;height:1px;background:#b0b0b8"></div>
<div class="a" style="left:10px;top:414px;width:149px;height:17px;background:#e6e6ef"></div>
<div class="t" style="left:10px;top:416px;">Geographie</div>
<div class="a" style="left:163px;top:414px;width:49px;height:17px;background:#e6e6ef"></div>
<div class="a" style="left:213px;top:414px;width:49px;height:17px;background:#e6e6ef"></div>
<div class="a" style="left:266px;top:414px;width:49px;height:17px;background:#e6e6ef"></div>
<div class="a" style="left:316px;top:414px;width:49px;height:17px;background:#e6e6ef"></div>
<div class="a" style="left:369px;top:414px;width:49px;height:17px;background:#ffffff"></div>
<div class="a" style="left:419px;top:414px;width:49px;height:17px;background:#ffffff"></div>
<div class="a" style="left:472px;top:414px;width:49px;height:17px;background:#ffffff"></div>
<div class="a" style="left:522px;top:414px;width:49px;height:17px;background:#ffffff"></div>
<div class="a" style="left:575px;top:414px;width:49px;height:17px;background:#e6e6ef"></div>
<div class="a" style="left:628px;top:414px;width:49px;height:17px;background:#e6e6ef"></div>
<div class="a" style="left:160px;top:414px;width:2px;height:17px;background:#e6e6ef"></div>
<div class="a" style="left:263px;top:414px;width:2px;height:17px;background:#e6e6ef"></div>
<div class="a" style="left:366px;top:414px;width:2px;height:17px;background:#e6e6ef"></div>
<div class="a" style="left:469px;top:414px;width:2px;height:17px;background:#e6e6ef"></div>
<div class="a" style="left:572px;top:414px;width:2px;height:17px;background:#e6e6ef"></div>
<div class="a" style="left:625px;top:414px;width:2px;height:17px;background:#e6e6ef"></div>
<div class="a" style="left:10px;top:431px;width:668px;height:1px;background:#b0b0b8"></div>
<div class="a" style="left:10px;top:432px;width:149px;height:17px;background:#3f7ff8"></div>
<div class="t" style="left:10px;top:434px;color:#fff">Ethik</div>
<div class="a" style="left:163px;top:432px;width:49px;height:17px;background:#e9effd"></div>
<div class="a" style="left:213px;top:432px;width:49px;height:17px;background:#e9effd"></div>
<div class="a" style="left:266px;top:432px;width:49px;height:17px;background:#e9effd"></div>
<div class="a" style="left:316px;top:432px;width:49px;height:17px;background:#e9effd"></div>
<div class="a" style="left:369px;top:432px;width:49px;height:17px;background:#e9effd"></div>
<div class="a" style="left:419px;top:432px;width:49px;height:17px;background:#e9effd"></div>
<div class="a" style="left:472px;top:432px;width:49px;height:17px;background:#e9effd"></div>
<div class="a" style="left:522px;top:432px;width:49px;height:17px;background:#e9effd"></div>
<div class="a" style="left:575px;top:432px;width:49px;height:17px;background:#c9d8f5"></div>
<div class="a" style="left:628px;top:432px;width:49px;height:17px;background:#c9d8f5"></div>
<div class="a" style="left:160px;top:432px;width:2px;height:17px;background:#cfdcf6"></div>
<div class="a" style="left:263px;top:432px;width:2px;height:17px;background:#cfdcf6"></div>
<div class="a" style="left:366px;top:432px;width:2px;height:17px;background:#cfdcf6"></div>
<div class="a" style="left:469px;top:432px;width:2px;height:17px;background:#cfdcf6"></div>
<div class="a" style="left:572px;top:432px;width:2px;height:17px;background:#cfdcf6"></div>
<div class="a" style="left:625px;top:432px;width:2px;height:17px;background:#cfdcf6"></div>
<div class="a" style="left:213px;top:432px;width:49px;height:17px;background:#eeee33;border:2px solid #3a7fd6"></div>
<div class="t" style="left:213px;top:434px;width:49px;text-align:center;">04</div>
<div class="a" style="left:316px;top:432px;width:49px;height:17px;background:#f8f8ff;border:2px solid #3a7fd6"></div>
<div class="t" style="left:316px;top:434px;width:49px;text-align:center;">12</div>
<div class="t" style="left:575px;top:434px;width:49px;text-align:center;">8,0</div>
<div class="t" style="left:628px;top:434px;width:49px;text-align:center;">8,0</div>
<div class="a" style="left:10px;top:449px;width:668px;height:1px;background:#b0b0b8"></div>
<div class="a" style="left:10px;top:450px;width:149px;height:17px;background:#e6e6ef"></div>
<div class="t" style="left:10px;top:452px;">Mathematik</div>
<div class="a" style="left:163px;top:450px;width:49px;height:17px;background:#ffffff"></div>
<div class="a" style="left:213px;top:450px;width:49px;height:17px;background:#ffffff"></div>
<div class="a" style="left:266px;top:450px;width:49px;height:17px;background:#ffffff"></div>
<div class="a" style="left:316px;top:450px;width:49px;height:17px;background:#ffffff"></div>
<div class="a" style="left:369px;top:450px;width:49px;height:17px;background:#ffffff"></div>
<div class="a" style="left:419px;top:450px;width:49px;height:17px;background:#ffffff"></div>
<div class="a" style="left:472px;top:450px;width:49px;height:17px;background:#ffffff"></div>
<div class="a" style="left:522px;top:450px;width:49px;height:17px;background:#ffffff"></div>
<div class="a" style="left:575px;top:450px;width:49px;height:17px;background:#e6e6ef"></div>
<div class="a" style="left:628px;top:450px;width:49px;height:17px;background:#e6e6ef"></div>
<div class="a" style="left:160px;top:450px;width:2px;height:17px;background:#f4f4fc"></div>
<div class="a" style="left:263px;top:450px;width:2px;height:17px;background:#f4f4fc"></div>
<div class="a" style="left:366px;top:450px;width:2px;height:17px;background:#f4f4fc"></div>
<div class="a" style="left:469px;top:450px;width:2px;height:17px;background:#f4f4fc"></div>
<div class="a" style="left:572px;top:450px;width:2px;height:17px;background:#f4f4fc"></div>
<div class="a" style="left:625px;top:450px;width:2px;height:17px;background:#f4f4fc"></div>
<div class="a" style="left:213px;top:450px;width:49px;height:17px;background:#ffffff;border:2px solid #3a7fd6"></div>
<div class="t" style="left:213px;top:452px;width:49px;text-align:center;">09</div>
<div class="a" style="left:316px;top:450px;width:49px;height:17px;background:#ffffff;border:2px solid #3a7fd6"></div>
<div class="t" style="left:316px;top:452px;width:49px;text-align:center;">12</div>
<div class="t" style="left:575px;top:452px;width:49px;text-align:center;">10,5</div>
<div class="t" style="left:628px;top:452px;width:49px;text-align:center;">10,5</div>
<div class="a" style="left:10px;top:467px;width:668px;height:1px;background:#b0b0b8"></div>
<div class="a" style="left:10px;top:468px;width:149px;height:17px;background:#c9d8f5"></div>
<div class="t" style="left:10px;top:470px;">Biologie</div>
<div class="a" style="left:163px;top:468px;width:49px;height:17px;background:#e9effd"></div>
<div class="a" style="left:213px;top:468px;width:49px;height:17px;background:#e9effd"></div>
<div class="a" style="left:266px;top:468px;width:49px;height:17px;background:#e9effd"></div>
<div class="a" style="left:316px;top:468px;width:49px;height:17px;background:#e9effd"></div>
<div class="a" style="left:369px;top:468px;width:49px;height:17px;background:#e9effd"></div>
<div class="a" style="left:419px;top:468px;width:49px;height:17px;background:#e9effd"></div>
<div class="a" style="left:472px;top:468px;width:49px;height:17px;background:#e9effd"></div>
<div class="a" style="left:522px;top:468px;width:49px;height:17px;background:#e9effd"></div>
<div class="a" style="left:575px;top:468px;width:49px;height:17px;background:#c9d8f5"></div>
<div class="a" style="left:628px;top:468px;width:49px;height:17px;background:#c9d8f5"></div>
<div class="a" style="left:160px;top:468px;width:2px;height:17px;background:#cfdcf6"></div>
<div class="a" style="left:263px;top:468px;width:2px;height:17px;background:#cfdcf6"></div>
<div class="a" style="left:366px;top:468px;width:2px;height:17px;background:#cfdcf6"></div>
<div class="a" style="left:469px;top:468px;width:2px;height:17px;background:#cfdcf6"></div>
<div class="a" style="left:572px;top:468px;width:2px;height:17px;background:#cfdcf6"></div>
<div class="a" style="left:625px;top:468px;width:2px;height:17px;background:#cfdcf6"></div>
<div class="a" style="left:213px;top:468px;width:49px;height:17px;background:#e9effd;border:2px solid #3a7fd6"></div>
<div class="t" style="left:213px;top:470px;width:49px;text-align:center;">09</div>
<div class="a" style="left:316px;top:468px;width:49px;height:17px;background:#e9effd;border:2px solid #3a7fd6"></div>
<div class="t" style="left:316px;top:470px;width:49px;text-align:center;">12</div>
<div class="t" style="left:575px;top:470px;width:49px;text-align:center;">10,5</div>
<div class="t" style="left:628px;top:470px;width:49px;text-align:center;">10,5</div>
<div class="a" style="left:10px;top:485px;width:668px;height:1px;background:#b0b0b8"></div>
<div class="a" style="left:10px;top:486px;width:149px;height:17px;background:#e6e6ef"></div>
<div class="t" style="left:10px;top:488px;">Naturwissenschaft und Tech...</div>
<div class="a" style="left:163px;top:486px;width:49px;height:17px;background:#ffffff"></div>
<div class="a" style="left:213px;top:486px;width:49px;height:17px;background:#ffffff"></div>
<div class="a" style="left:266px;top:486px;width:49px;height:17px;background:#ffffff"></div>
<div class="a" style="left:316px;top:486px;width:49px;height:17px;background:#ffffff"></div>
<div class="a" style="left:369px;top:486px;width:49px;height:17px;background:#ffffff"></div>
<div class="a" style="left:419px;top:486px;width:49px;height:17px;background:#ffffff"></div>
<div class="a" style="left:472px;top:486px;width:49px;height:17px;background:#ffffff"></div>
<div class="a" style="left:522px;top:486px;width:49px;height:17px;background:#ffffff"></div>
<div class="a" style="left:575px;top:486px;width:49px;height:17px;background:#e6e6ef"></div>
<div class="a" style="left:628px;top:486px;width:49px;height:17px;background:#e6e6ef"></div>
<div class="a" style="left:160px;top:486px;width:2px;height:17px;background:#f4f4fc"></div>
<div class="a" style="left:263px;top:486px;width:2px;height:17px;background:#f4f4fc"></div>
<div class="a" style="left:366px;top:486px;width:2px;height:17px;background:#f4f4fc"></div>
<div class="a" style="left:469px;top:486px;width:2px;height:17px;background:#f4f4fc"></div>
<div class="a" style="left:572px;top:486px;width:2px;height:17px;background:#f4f4fc"></div>
<div class="a" style="left:625px;top:486px;width:2px;height:17px;background:#f4f4fc"></div>
<div class="a" style="left:213px;top:486px;width:49px;height:17px;background:#ffffff;border:2px solid #3a7fd6"></div>
<div class="t" style="left:213px;top:488px;width:49px;text-align:center;">09</div>
<div class="a" style="left:316px;top:486px;width:49px;height:17px;background:#ffffff;border:2px solid #3a7fd6"></div>
<div class="t" style="left:316px;top:488px;width:49px;text-align:center;">12</div>
<div class="t" style="left:575px;top:488px;width:49px;text-align:center;">10,5</div>
<div class="t" style="left:628px;top:488px;width:49px;text-align:center;">10,5</div>
<div class="a" style="left:10px;top:503px;width:668px;height:1px;background:#b0b0b8"></div>
<div class="a" style="left:10px;top:504px;width:149px;height:17px;background:#c9d8f5"></div>
<div class="t" style="left:10px;top:506px;">Sport</div>
<div class="a" style="left:163px;top:504px;width:49px;height:17px;background:#e9effd"></div>
<div class="a" style="left:213px;top:504px;width:49px;height:17px;background:#e9effd"></div>
<div class="a" style="left:266px;top:504px;width:49px;height:17px;background:#e9effd"></div>
<div class="a" style="left:316px;top:504px;width:49px;height:17px;background:#e9effd"></div>
<div class="a" style="left:369px;top:504px;width:49px;height:17px;background:#e9effd"></div>
<div class="a" style="left:419px;top:504px;width:49px;height:17px;background:#e9effd"></div>
<div class="a" style="left:472px;top:504px;width:49px;height:17px;background:#e9effd"></div>
<div class="a" style="left:522px;top:504px;width:49px;height:17px;background:#e9effd"></div>
<div class="a" style="left:575px;top:504px;width:49px;height:17px;background:#c9d8f5"></div>
<div class="a" style="left:628px;top:504px;width:49px;height:17px;background:#c9d8f5"></div>
<div class="a" style="left:160px;top:504px;width:2px;height:17px;background:#cfdcf6"></div>
<div class="a" style="left:263px;top:504px;width:2px;height:17px;background:#cfdcf6"></div>
<div class="a" style="left:366px;top:504px;width:2px;height:17px;background:#cfdcf6"></div>
<div class="a" style="left:469px;top:504px;width:2px;height:17px;background:#cfdcf6"></div>
<div class="a" style="left:572px;top:504px;width:2px;height:17px;background:#cfdcf6"></div>
<div class="a" style="left:625px;top:504px;width:2px;height:17px;background:#cfdcf6"></div>
<div class="a" style="left:213px;top:504px;width:49px;height:17px;background:#e9effd;border:2px solid #3a7fd6"></div>
<div class="t" style="left:213px;top:506px;width:49px;text-align:center;">09</div>
<div class="a" style="left:316px;top:504px;width:49px;height:17px;background:#e9effd;border:2px solid #3a7fd6"></div>
<div class="t" style="left:316px;top:506px;width:49px;text-align:center;">12</div>
<div class="t" style="left:575px;top:506px;width:49px;text-align:center;">10,5</div>
<div class="t" style="left:628px;top:506px;width:49px;text-align:center;">10,5</div>
<div class="a" style="left:10px;top:521px;width:668px;height:1px;background:#b0b0b8"></div>
<div class="a" style="left:10px;top:522px;width:149px;height:17px;background:#e6e6ef"></div>
<div class="a" style="left:163px;top:522px;width:49px;height:17px;background:#e6e6ef"></div>
<div class="a" style="left:213px;top:522px;width:49px;height:17px;background:#e6e6ef"></div>
<div class="a" style="left:266px;top:522px;width:49px;height:17px;background:#e6e6ef"></div>
<div class="a" style="left:316px;top:522px;width:49px;height:17px;background:#e6e6ef"></div>
<div class="a" style="left:369px;top:522px;width:49px;height:17px;background:#e6e6ef"></div>
<div class="a" style="left:419px;top:522px;width:49px;height:17px;background:#e6e6ef"></div>
<div class="a" style="left:472px;top:522px;width:49px;height:17px;background:#e6e6ef"></div>
<div class="a" style="left:522px;top:522px;width:49px;height:17px;background:#e6e6ef"></div>
<div class="a" style="left:575px;top:522px;width:49px;height:17px;background:#e6e6ef"></div>
<div class="a" style="left:628px;top:522px;width:49px;height:17px;background:#e6e6ef"></div>
<div class="a" style="left:160px;top:522px;width:2px;height:17px;background:#eeeef6"></div>
<div class="a" style="left:263px;top:522px;width:2px;height:17px;background:#eeeef6"></div>
<div class="a" style="left:366px;top:522px;width:2px;height:17px;background:#eeeef6"></div>
<div class="a" style="left:469px;top:522px;width:2px;height:17px;background:#eeeef6"></div>
<div class="a" style="left:572px;top:522px;width:2px;height:17px;background:#eeeef6"></div>
<div class="a" style="left:625px;top:522px;width:2px;height:17px;background:#eeeef6"></div>
<div class="t" style="left:11px;top:524px;font-weight:bold;letter-spacing:1px">Mittelwerte</div>
<div class="t" style="left:163px;top:524px;width:49px;text-align:center;font-weight:bold;letter-spacing:1px;text-indent:1px">9,00</div>
<div class="t" style="left:213px;top:524px;width:49px;text-align:center;font-weight:bold;letter-spacing:1px;text-indent:1px">8,21</div>
<div class="t" style="left:316px;top:524px;width:49px;text-align:center;font-weight:bold;letter-spacing:1px;text-indent:1px">11,71</div>
<div class="t" style="left:575px;top:524px;width:49px;text-align:center;font-weight:bold;letter-spacing:1px;text-indent:1px">9,96</div>
<div class="t" style="left:628px;top:524px;width:49px;text-align:center;font-weight:bold;letter-spacing:1px;text-indent:1px">9,96</div>
<div class="a" style="left:10px;top:539px;width:668px;height:1px;background:#b0b0b8"></div>
<div class="a" style="left:159px;top:247px;width:1px;height:293px;background:#b0b0b8"></div>
<div class="a" style="left:162px;top:247px;width:1px;height:293px;background:#b0b0b8"></div>
<div class="a" style="left:262px;top:247px;width:1px;height:293px;background:#b0b0b8"></div>
<div class="a" style="left:265px;top:247px;width:1px;height:293px;background:#b0b0b8"></div>
<div class="a" style="left:365px;top:247px;width:1px;height:293px;background:#b0b0b8"></div>
<div class="a" style="left:368px;top:247px;width:1px;height:293px;background:#b0b0b8"></div>
<div class="a" style="left:468px;top:247px;width:1px;height:293px;background:#b0b0b8"></div>
<div class="a" style="left:471px;top:247px;width:1px;height:293px;background:#b0b0b8"></div>
<div class="a" style="left:571px;top:247px;width:1px;height:293px;background:#b0b0b8"></div>
<div class="a" style="left:574px;top:247px;width:1px;height:293px;background:#b0b0b8"></div>
<div class="a" style="left:624px;top:247px;width:1px;height:293px;background:#b0b0b8"></div>
<div class="a" style="left:627px;top:247px;width:1px;height:293px;background:#b0b0b8"></div>
<div class="a" style="left:677px;top:247px;width:1px;height:293px;background:#b0b0b8"></div>
<div class="a" style="left:212px;top:247px;width:1px;height:293px;background:#b0b0b8"></div>
<div class="a" style="left:315px;top:247px;width:1px;height:293px;background:#b0b0b8"></div>
<div class="a" style="left:418px;top:247px;width:1px;height:293px;background:#b0b0b8"></div>
<div class="a" style="left:521px;top:247px;width:1px;height:293px;background:#b0b0b8"></div>
<div class="a" style="left:160px;top:175px;width:207px;height:369px;border:2px solid #f00;box-shadow:inset 3px 3px 4px rgba(0,0,0,.28), 2px 2px 3px rgba(0,0,0,.22)"></div>
<div class="a" style="left:1111px;top:178px;width:1px;height:363px;background:#fff"></div>
<div class="a" style="left:1094px;top:178px;width:17px;height:69px;border:1px solid #2d4d86;border-radius:3px;background:linear-gradient(#ffffff,#d2d2dc)"></div>
<svg class="a" style="left:1092px;top:198px" width="22" height="28" viewBox="0 0 22 28"><path d="M6.5 17.5V9.5H14.5V13M6.5 11.5H14.5M10.5 9.5V13M6.5 17.5H8.5" stroke="#000" fill="none" stroke-width="1"/><path d="M9 15H16L12.5 19Z" fill="#000"/></svg>
<div class="a" style="left:1095px;top:248px;width:16px;height:16px;border:1px solid #b4c3e2;border-radius:2px;background:linear-gradient(#dde6fd,#a9b8dc)"></div>
<svg class="a" style="left:1098px;top:252px" width="10" height="8"><path d="M1 6L5 2L9 6" stroke="#3e5273" stroke-width="2" fill="none"/></svg>
<div class="a" style="left:1095px;top:264px;width:16px;height:12px;background:#fcfcff"></div>
<div class="a" style="left:1095px;top:276px;width:16px;height:247px;border:1px solid #b4c3e2;border-radius:2px;background:linear-gradient(90deg,#eef2fe,#c5d3f6 40%,#a9b8dc)"></div>
<svg class="a" style="left:1099px;top:396px" width="8" height="7"><path d="M1 .5h6M1 2.5h6M1 4.5h6M1 6.5h6" stroke="#8fa0c6" stroke-width="1"/></svg>
<div class="a" style="left:1095px;top:523px;width:16px;height:17px;border:1px solid #b4c3e2;border-radius:2px;background:linear-gradient(#dde6fd,#a9b8dc)"></div>
<svg class="a" style="left:1098px;top:528px" width="10" height="8"><path d="M1 2L5 6L9 2" stroke="#3e5273" stroke-width="2" fill="none"/></svg>
<div class="a" style="left:9px;top:553px;width:9px;height:1px;background:#a3a3ab"></div>
<div class="t" style="left:20px;top:547px;">Besondere Lernleistung</div>
<div class="a" style="left:139px;top:553px;width:22px;height:1px;background:#a3a3ab"></div>
<div class="t" style="left:-197px;top:566px;width:300px;text-align:right;">Seminarkurs (JL)</div>
<div class="a" style="left:115px;top:563px;width:40px;height:19px;border:1px solid #7f9db9;background:#f4f4fc"></div>
<div class="t" style="left:-197px;top:591px;width:300px;text-align:right;">Sonstige Art</div>
<div class="a" style="left:115px;top:588px;width:40px;height:19px;border:1px solid #7f9db9;background:#f4f4fc"></div>
<div class="t" style="left:-197px;top:616px;width:300px;text-align:right;">Dokumentation</div>
<div class="a" style="left:115px;top:613px;width:40px;height:19px;border:1px solid #7f9db9;background:#f4f4fc"></div>
<div class="t" style="left:-197px;top:641px;width:300px;text-align:right;">Kolloquium</div>
<div class="a" style="left:115px;top:638px;width:40px;height:19px;border:1px solid #7f9db9;background:#f4f4fc"></div>
<div class="t" style="left:-197px;top:666px;width:300px;text-align:right;">Endnote</div>
<div class="a" style="left:115px;top:663px;width:40px;height:19px;border:1px solid #7f9db9;background:#f4f4fc"></div>
<div class="a" style="left:173px;top:553px;width:9px;height:1px;background:#a3a3ab"></div>
<div class="t" style="left:184px;top:547px;">Weitere Zeugnisdaten</div>
<div class="a" style="left:296px;top:553px;width:815px;height:1px;background:#a3a3ab"></div>
<div class="a" style="left:179px;top:563px;width:927px;height:1px;background:#b0b0b8"></div>
<div class="a" style="left:179px;top:563px;width:1px;height:94px;background:#b0b0b8"></div>
<div class="t" style="left:180px;top:568px;">Halbjahr</div>
<div class="t" style="left:365px;top:568px;">Verhalten</div>
<div class="t" style="left:550px;top:568px;">Mitarbeit</div>
<div class="t" style="left:735px;top:568px;">Lob/Preis</div>
<div class="t" style="left:920px;top:568px;">Bemerkungen</div>
<div class="a" style="left:363px;top:567px;width:1px;height:13px;background:#c0c0c8"></div>
<div class="a" style="left:548px;top:567px;width:1px;height:13px;background:#c0c0c8"></div>
<div class="a" style="left:733px;top:567px;width:1px;height:13px;background:#c0c0c8"></div>
<div class="a" style="left:918px;top:567px;width:1px;height:13px;background:#c0c0c8"></div>
<div class="a" style="left:1103px;top:567px;width:1px;height:13px;background:#c0c0c8"></div>
<div class="a" style="left:180px;top:584px;width:184px;height:17px;background:#e6e6ef"></div>
<div class="t" style="left:182px;top:586px;">1.1</div>
<div class="a" style="left:365px;top:584px;width:184px;height:17px;background:#ffffff"></div>
<div class="a" style="left:550px;top:584px;width:184px;height:17px;background:#ffffff"></div>
<div class="a" style="left:735px;top:584px;width:184px;height:17px;background:#ffffff"></div>
<div class="a" style="left:920px;top:584px;width:165px;height:17px;background:#e6e6ef"></div>
<div class="t" style="left:920px;top:586px;">Hannes war Schülersprecher.</div>
<div class="a" style="left:365px;top:584px;width:184px;height:17px;background:#ffffff;border:2px solid #3a7fd6"></div>
<div class="t" style="left:365px;top:586px;width:184px;text-align:center;">2</div>
<div class="a" style="left:550px;top:584px;width:184px;height:17px;background:#ffffff;border:2px solid #3a7fd6"></div>
<div class="t" style="left:550px;top:586px;width:184px;text-align:center;">1</div>
<div class="a" style="left:180px;top:601px;width:905px;height:1px;background:#b0b0b8"></div>
<div class="a" style="left:1085px;top:584px;width:19px;height:17px;border:1px solid #2d4d86;border-radius:3px;background:linear-gradient(#ffffff,#d2d2dc)"></div>
<svg class="a" style="left:1090px;top:594px" width="10" height="3"><rect x="1" y="0" width="1.4" height="2" fill="#000"/><rect x="4" y="0" width="1.4" height="2" fill="#000"/><rect x="7" y="0" width="1.4" height="2" fill="#000"/></svg>
<div class="a" style="left:180px;top:602px;width:184px;height:17px;background:#c9d8f5"></div>
<div class="t" style="left:182px;top:604px;">1.2</div>
<div class="a" style="left:365px;top:602px;width:184px;height:17px;background:#e9effd"></div>
<div class="a" style="left:550px;top:602px;width:184px;height:17px;background:#e9effd"></div>
<div class="a" style="left:735px;top:602px;width:184px;height:17px;background:#e9effd"></div>
<div class="a" style="left:920px;top:602px;width:165px;height:17px;background:#3f7ff8"></div>
<div class="t" style="left:920px;top:604px;color:#fff">Hannes war Schülersprecher.</div>
<div class="t" style="left:735px;top:604px;width:184px;text-align:center;">Lob</div>
<div class="a" style="left:365px;top:602px;width:184px;height:17px;background:#e9effd;border:2px solid #3a7fd6"></div>
<div class="t" style="left:365px;top:604px;width:184px;text-align:center;">1</div>
<div class="a" style="left:550px;top:602px;width:184px;height:17px;background:#e9effd;border:2px solid #3a7fd6"></div>
<div class="t" style="left:550px;top:604px;width:184px;text-align:center;">1</div>
<div class="a" style="left:180px;top:619px;width:905px;height:1px;background:#b0b0b8"></div>
<div class="a" style="left:1085px;top:602px;width:19px;height:17px;border:1px solid #2d4d86;border-radius:3px;background:linear-gradient(#ffffff,#d2d2dc)"></div>
<svg class="a" style="left:1090px;top:612px" width="10" height="3"><rect x="1" y="0" width="1.4" height="2" fill="#000"/><rect x="4" y="0" width="1.4" height="2" fill="#000"/><rect x="7" y="0" width="1.4" height="2" fill="#000"/></svg>
<div class="a" style="left:180px;top:620px;width:184px;height:17px;background:#e6e6ef"></div>
<div class="t" style="left:182px;top:622px;">2.1</div>
<div class="a" style="left:365px;top:620px;width:184px;height:17px;background:#ffffff"></div>
<div class="a" style="left:550px;top:620px;width:184px;height:17px;background:#ffffff"></div>
<div class="a" style="left:735px;top:620px;width:184px;height:17px;background:#ffffff"></div>
<div class="a" style="left:920px;top:620px;width:165px;height:17px;background:#e6e6ef"></div>
<div class="a" style="left:180px;top:637px;width:905px;height:1px;background:#b0b0b8"></div>
<div class="a" style="left:1085px;top:620px;width:19px;height:17px;border:1px solid #2d4d86;border-radius:3px;background:linear-gradient(#ffffff,#d2d2dc)"></div>
<svg class="a" style="left:1090px;top:630px" width="10" height="3"><rect x="1" y="0" width="1.4" height="2" fill="#000"/><rect x="4" y="0" width="1.4" height="2" fill="#000"/><rect x="7" y="0" width="1.4" height="2" fill="#000"/></svg>
<div class="a" style="left:180px;top:638px;width:184px;height:17px;background:#c9d8f5"></div>
<div class="t" style="left:182px;top:640px;">2.2</div>
<div class="a" style="left:365px;top:638px;width:184px;height:17px;background:#e9effd"></div>
<div class="a" style="left:550px;top:638px;width:184px;height:17px;background:#e9effd"></div>
<div class="a" style="left:735px;top:638px;width:184px;height:17px;background:#e9effd"></div>
<div class="a" style="left:920px;top:638px;width:165px;height:17px;background:#d9e1f5"></div>
<div class="a" style="left:180px;top:655px;width:925px;height:1px;background:#b0b0b8"></div>
<div class="a" style="left:1085px;top:638px;width:19px;height:17px;border:1px solid #2d4d86;border-radius:3px;background:linear-gradient(#ffffff,#d2d2dc)"></div>
<svg class="a" style="left:1090px;top:648px" width="10" height="3"><rect x="1" y="0" width="1.4" height="2" fill="#000"/><rect x="4" y="0" width="1.4" height="2" fill="#000"/><rect x="7" y="0" width="1.4" height="2" fill="#000"/></svg>
<div class="a" style="left:364px;top:584px;width:1px;height:72px;background:#b0b0b8"></div>
<div class="a" style="left:549px;top:584px;width:1px;height:72px;background:#b0b0b8"></div>
<div class="a" style="left:734px;top:584px;width:1px;height:72px;background:#b0b0b8"></div>
<div class="a" style="left:919px;top:584px;width:1px;height:72px;background:#b0b0b8"></div>
<div class="a" style="left:180px;top:583px;width:905px;height:1px;background:#b0b0b8"></div>
<div class="a" style="left:177px;top:582px;width:908px;height:40px;border:2px solid #f00;box-shadow:inset 3px 3px 4px rgba(0,0,0,.28), 2px 2px 3px rgba(0,0,0,.22)"></div>
<div class="a" style="left:9px;top:700px;width:9px;height:1px;background:#a3a3ab"></div>
<div class="t" style="left:20px;top:694px;">Details</div>
<div class="a" style="left:58px;top:700px;width:1053px;height:1px;background:#a3a3ab"></div>
<div class="a" style="left:15px;top:710px;width:1091px;height:72px;background:#fff;border:1px solid #c2c2ca"></div>
<div class="t" style="left:18px;top:712px;">Hannes war Schülersprecher.</div>
<div class="a" style="left:160px;top:712px;width:1px;height:13px;background:#000"></div>
<div class="a" style="left:1016px;top:788px;width:90px;height:22px;border:1px solid #c6c6d0;border-radius:3px;background:linear-gradient(#ffffff,#e6e6ee)"></div>
<div class="t" style="left:1016px;top:793px;width:90px;text-align:center;color:#a0a0a8">Übernehmen</div>
<div class="a" style="left:2px;top:828px;width:10px;height:1px;background:#a3a3ab"></div>
<div class="t" style="left:14px;top:822px;">Daten der Einzelnote</div>
<div class="a" style="left:120px;top:828px;width:996px;height:1px;background:#a3a3ab"></div>
<div class="t" style="left:213px;top:839px;">Leistungsgegenstand</div>
<div class="t" style="left:617px;top:839px;">Bemerkungen (Fach)</div>
<div class="t" style="left:-213px;top:859px;width:300px;text-align:right;">Datum</div>
<div class="a" style="left:101px;top:858px;width:85px;height:20px;border:1px solid #7f9db9;background:#fff"></div>
<div class="a" style="left:186px;top:858px;width:15px;height:20px;border:1px solid #b4c3e2;border-radius:2px;background:linear-gradient(#dde6fd,#a9b8dc)"></div>
<svg class="a" style="left:189px;top:865px" width="10" height="8"><path d="M1 1.5L5 5.5L9 1.5" stroke="#3e5273" stroke-width="2" fill="none"/></svg>
<div class="t" style="left:-213px;top:885px;width:300px;text-align:right;">Gewicht</div>
<div class="a" style="left:101px;top:884px;width:30px;height:14px;border:1px solid #7f9db9;border-bottom:none;background:#f4f4fc"></div>
<div class="a" style="left:213px;top:858px;width:392px;height:40px;border:1px solid #c2c2ca;border-bottom:none;background:#fff"></div>
<div class="a" style="left:588px;top:859px;width:16px;height:17px;border:1px solid #b4c3e2;border-radius:2px;background:linear-gradient(#dde6fd,#a9b8dc)"></div>
<svg class="a" style="left:591px;top:863px" width="10" height="8"><path d="M1 6L5 2L9 6" stroke="#3e5273" stroke-width="2" fill="none"/></svg>
<div class="a" style="left:588px;top:877px;width:16px;height:20px;border:1px solid #b4c3e2;border-radius:2px;background:linear-gradient(90deg,#eef2fe,#c5d3f6 40%,#a9b8dc)"></div>
<svg class="a" style="left:592px;top:886px" width="8" height="8"><path d="M0 .5h7M0 2.5h7M0 4.5h7M0 6.5h7" stroke="#8fa0c6" stroke-width="1"/></svg>
<div class="a" style="left:617px;top:858px;width:494px;height:40px;border:1px solid #c2c2ca;border-bottom:none;background:#fff"></div>
<div class="a" style="left:0px;top:896px;width:1116px;height:1px;background:#8c9cb6"></div>
<div class="a" style="left:0px;top:897px;width:1116px;height:3px;background:#f4f4fa"></div>
</body></html>
